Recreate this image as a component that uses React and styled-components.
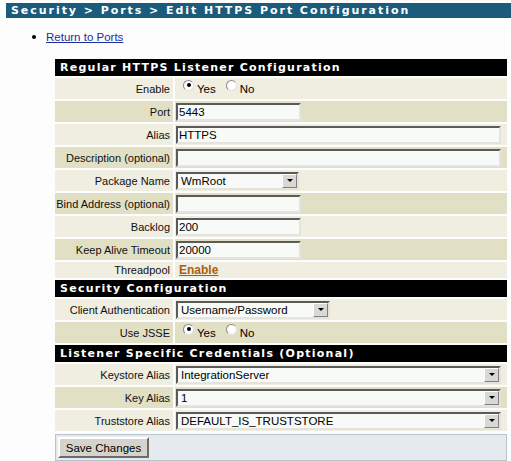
import styled, { createGlobalStyle } from "styled-components";

const GlobalStyle = createGlobalStyle`
  body {
    margin: 0;
    background: #fcfdfc;
    font-family: "Liberation Sans", Arial, sans-serif;
    font-size: 11px;
    color: #000;
  }
`;

const Page = styled.div`
  padding: 3px 0 0 6px;
`;

const TitleBar = styled.div`
  height: 15px;
  background: #1b5b7b;
  color: #fff;
  font-family: "DejaVu Sans", Verdana, sans-serif;
  font-weight: 700;
  font-size: 11px;
  letter-spacing: 1.95px;
  line-height: 15px;
  padding-left: 5px;
  white-space: nowrap;
`;

const LinkList = styled.ul`
  margin: 11px 0 0 0;
  padding: 0 0 0 41px;
  list-style: disc;
  font-size: 11.5px;
  li::marker {
    font-size: 13px;
  }
`;

const BlueLink = styled.a`
  color: #1c2ea3;
  text-decoration: underline;
  margin-left: -1px;
`;

const Form = styled.div`
  margin: 16px 0 0 49px;
  width: 452px;
  display: grid;
  grid-template-columns: 118px 332px;
  column-gap: 2px;
  row-gap: 2px;
`;

const SectionHead = styled.div`
  grid-column: 1 / -1;
  height: 17px;
  background: #000;
  color: #fff;
  font-family: "DejaVu Sans", Verdana, sans-serif;
  font-weight: 700;
  font-size: 11px;
  letter-spacing: 1.25px;
  line-height: 17px;
  padding-left: 5px;
  white-space: nowrap;
`;

const Label = styled.div`
  height: ${p => (p.short ? "16px" : "21px")};
  background: ${p => (p.dark ? "#e1dfc4" : "#efeee0")};
  display: flex;
  align-items: center;
  justify-content: flex-end;
  padding-right: 3px;
  white-space: nowrap;
  font-size: 11px;
  color: #111;
`;

const Value = styled.div`
  height: ${p => (p.short ? "16px" : "21px")};
  background: ${p => (p.dark ? "#e1dfc4" : "#efeee0")};
  display: flex;
  align-items: center;
  padding-left: 1px;
`;

const TextInput = styled.input`
  box-sizing: border-box;
  width: ${p => p.w}px;
  height: 18px;
  border: 2px solid;
  border-color: #5a5a5a #e4e4dc #e4e4dc #5a5a5a;
  background: #f7faf6;
  font-family: "Liberation Sans", Arial, sans-serif;
  font-size: 11.5px;
  padding: 0 1px;
  outline: none;
`;

const SelectBox = styled.div`
  box-sizing: border-box;
  width: ${p => p.w}px;
  height: 18px;
  border: 2px solid;
  border-color: #5a5a5a #e4e4dc #e4e4dc #5a5a5a;
  background: #f7faf6;
  display: flex;
  align-items: center;
  justify-content: space-between;
  font-size: 11.5px;
  padding-left: 3px;
`;

const ArrowButton = styled.span`
  box-sizing: border-box;
  width: 15px;
  height: 14px;
  background: #d8d8d4;
  border: 1px solid;
  border-color: #fff #808080 #808080 #fff;
  display: flex;
  align-items: center;
  justify-content: center;
  &::after {
    content: "";
    border-left: 3px solid transparent;
    border-right: 3px solid transparent;
    border-top: 3px solid #000;
  }
`;

const RadioGroup = styled.div`
  display: flex;
  align-items: center;
  gap: 10px;
  padding-left: 7px;
`;

const RadioOption = styled.label`
  display: flex;
  align-items: flex-start;
  gap: 3px;
  font-size: 11.5px;
`;

const RadioDot = styled.span`
  box-sizing: border-box;
  width: 11px;
  height: 11px;
  border-radius: 50%;
  border: 1px solid #8a8a8a;
  border-right-color: #e0e0e0;
  border-bottom-color: #e0e0e0;
  background: #fff;
  display: flex;
  align-items: center;
  justify-content: center;
  margin-top: -3px;
  &::after {
    content: "";
    width: 4px;
    height: 4px;
    border-radius: 50%;
    background: ${p => (p.checked ? "#000" : "transparent")};
  }
`;

const OrangeLink = styled.a`
  color: #a8600f;
  font-weight: 700;
  font-size: 12px;
  text-decoration: underline;
  padding-left: 3px;
`;

const ButtonRow = styled.div`
  grid-column: 1 / -1;
  height: 27px;
  box-sizing: border-box;
  background: #e4eaee;
  border: 1px solid #b8c4cc;
  display: flex;
  align-items: center;
  padding-left: 2px;
  margin-top: 1px;
`;

const Button = styled.button`
  box-sizing: border-box;
  height: 21px;
  width: 91px;
  background: #d6d3cc;
  border: 2px solid;
  border-color: #fff #6c6c6c #6c6c6c #fff;
  font-family: "Liberation Sans", Arial, sans-serif;
  font-size: 11.5px;
  color: #000;
  padding: 0;
`;

function Radios({ yes }) {
  return (
    <RadioGroup>
      <RadioOption>
        <RadioDot checked={yes} />
        Yes
      </RadioOption>
      <RadioOption>
        <RadioDot checked={!yes} />
        No
      </RadioOption>
    </RadioGroup>
  );
}

function Select({ w, value }) {
  return (
    <SelectBox w={w}>
      <span>{value}</span>
      <ArrowButton />
    </SelectBox>
  );
}

function Row({ label, dark, short, children }) {
  return (
    <>
      <Label dark={dark} short={short}>{label}</Label>
      <Value dark={dark} short={short}>{children}</Value>
    </>
  );
}

export default function App() {
  return (
    <Page>
      <GlobalStyle />
      <TitleBar>Security &gt; Ports &gt; Edit HTTPS Port Configuration</TitleBar>
      <LinkList>
        <li>
          <BlueLink href="#ports">Return to Ports</BlueLink>
        </li>
      </LinkList>
      <Form>
        <SectionHead>Regular HTTPS Listener Configuration</SectionHead>
        <Row label="Enable"><Radios yes /></Row>
        <Row label="Port" dark><TextInput w={125} defaultValue="5443" /></Row>
        <Row label="Alias"><TextInput w={325} defaultValue="HTTPS" /></Row>
        <Row label="Description (optional)" dark><TextInput w={325} defaultValue="" /></Row>
        <Row label="Package Name"><Select w={123} value="WmRoot" /></Row>
        <Row label="Bind Address (optional)" dark><TextInput w={125} defaultValue="" /></Row>
        <Row label="Backlog"><TextInput w={125} defaultValue="200" /></Row>
        <Row label="Keep Alive Timeout" dark><TextInput w={125} defaultValue="20000" /></Row>
        <Row label="Threadpool" short><OrangeLink href="#threadpool">Enable</OrangeLink></Row>
        <SectionHead>Security Configuration</SectionHead>
        <Row label="Client Authentication"><Select w={154} value="Username/Password" /></Row>
        <Row label="Use JSSE" dark><Radios yes /></Row>
        <SectionHead>Listener Specific Credentials (Optional)</SectionHead>
        <Row label="Keystore Alias"><Select w={325} value="IntegrationServer" /></Row>
        <Row label="Key Alias" dark><Select w={325} value="1" /></Row>
        <Row label="Truststore Alias"><Select w={325} value="DEFAULT_IS_TRUSTSTORE" /></Row>
        <ButtonRow>
          <Button type="button">Save Changes</Button>
        </ButtonRow>
      </Form>
    </Page>
  );
}
